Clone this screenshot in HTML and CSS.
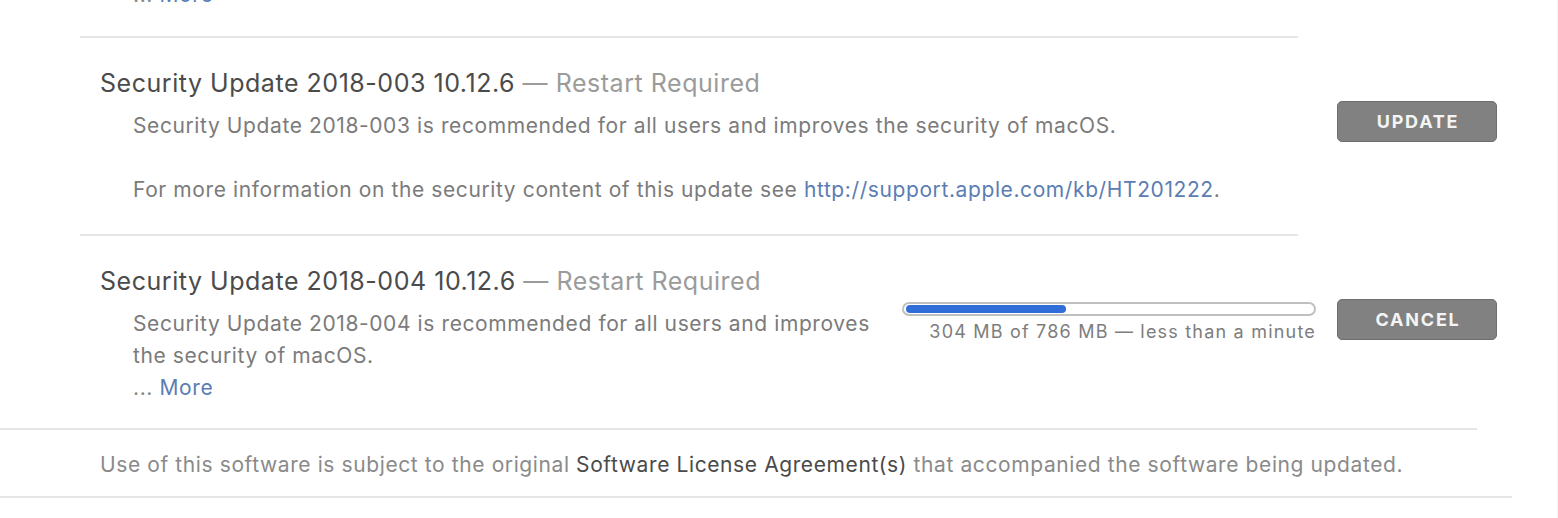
FILE: index.html
```html
<!DOCTYPE html>
<html lang="en">
<head>
<meta charset="utf-8">
<title>Software Update</title>
<link rel="stylesheet" href="styles.css">
</head>
<body>
<div class="page">
  <div class="prev-more"><span class="ellipsis">...</span> <a class="link">More</a></div>
  <div class="sep"></div>

  <div class="row">
    <div class="main">
      <div class="title">Security Update 2018-003 10.12.6 <span class="sub">— Restart Required</span></div>
      <div class="desc">
        <p>Security Update 2018-003 is recommended for all users and improves the security of macOS.</p>
        <p class="gap">For more information on the security content of this update see <a class="link">http://support.apple.com/kb/HT201222</a>.</p>
      </div>
    </div>
    <div class="actions">
      <button class="btn">UPDATE</button>
    </div>
  </div>
  <div class="sep"></div>

  <div class="row row--last">
    <div class="main">
      <div class="title">Security Update 2018-004 10.12.6 <span class="sub">— Restart Required</span></div>
      <div class="desc desc--narrow">
        <p>Security Update 2018-004 is recommended for all users and improves the security of macOS.</p>
        <p><span class="ellipsis">...</span> <a class="link">More</a></p>
      </div>
    </div>
    <div class="actions">
      <div class="progress">
        <div class="bar"><div class="fill" style="width: 39.4%"></div></div>
        <div class="progress-text">304 MB of 786 MB — less than a minute</div>
      </div>
      <button class="btn">CANCEL</button>
    </div>
  </div>

  <div class="sep sep--footer"></div>
  <div class="footer">
    Use of this software is subject to the original <span class="strong">Software License Agreement(s)</span> that accompanied the software being updated.
  </div>
  <div class="sep sep--bottom"></div>
</div>
</body>
</html>
```

FILE: styles.css
```css
html, body {
  margin: 0;
  padding: 0;
  background: #ffffff;
}

body {
  font-family: Inter, Roboto, "Liberation Sans", Arial, sans-serif;
  color: #4c4c4c;
  overflow: hidden;
}

.page {
  width: 1557px;
  height: 518px;
  border-right: 1px solid #f5f5f5;
  overflow: hidden;
}

.prev-more {
  margin-top: -21px;
  padding-left: 133px;
  font-size: 21px;
  letter-spacing: 0.6px;
  line-height: 32px;
  color: #7a7a7a;
}

.link {
  color: #5b7db3;
  text-decoration: none;
}

.ellipsis {
  color: #8a8a8a;
}

.sep {
  margin-left: 80px;
  width: 1218px;
  height: 2px;
  background: #e6e6e6;
}

.prev-more + .sep {
  margin-top: 25px;
}

.sep--footer {
  margin-left: 0;
  width: 1477px;
}

.sep--bottom {
  margin-left: 0;
  width: 1512px;
}

.row {
  display: flex;
  align-items: flex-start;
  padding: 30px 0 28px 100px;
}

.row--last {
  padding-bottom: 24px;
}

.main {
  flex: 1 1 auto;
  min-width: 0;
}

.title {
  font-size: 25px;
  letter-spacing: 0.53px;
  line-height: 30px;
  color: #4b4b4b;
  white-space: nowrap;
}

.sub {
  color: #9b9b9b;
}

.desc {
  margin-top: 12px;
  padding-left: 33px;
  font-size: 21px;
  letter-spacing: 0.6px;
  line-height: 32px;
  color: #7b7b7b;
}

.desc p {
  margin: 0;
}

.desc .gap {
  margin-top: 32px;
}

.desc--narrow {
  width: 745px;
}

.actions {
  flex: 0 0 auto;
  display: flex;
  align-items: flex-start;
  gap: 21px;
  margin-top: 33px;
  padding-right: 60px;
}

.btn {
  width: 160px;
  height: 41px;
  padding: 0 0 0 2px;
  border: 1px solid #6c6d6c;
  border-radius: 5px;
  background: #808180;
  color: #f4f4f4;
  font-family: Inter, Roboto, "Liberation Sans", Arial, sans-serif;
  font-size: 18px;
  font-weight: 700;
  letter-spacing: 1.8px;
  line-height: 39px;
}

.progress {
  width: 414px;
  margin-top: 3px;
}

.bar {
  height: 14px;
  box-sizing: border-box;
  border: 2px solid #c0c0c0;
  border-radius: 7px;
  padding: 1px 2px;
  background: #ffffff;
}

.fill {
  height: 8px;
  border-radius: 4px;
  background: #2f6ed8;
}

.progress-text {
  margin-top: 4px;
  text-align: right;
  font-size: 18px;
  letter-spacing: 1.2px;
  line-height: 24px;
  color: #7d7d7d;
}

.footer {
  padding: 20px 0 16px 100px;
  font-size: 21px;
  letter-spacing: 0.6px;
  line-height: 30px;
  color: #8a8a8a;
}

.strong {
  color: #4a4a4a;
}
```
